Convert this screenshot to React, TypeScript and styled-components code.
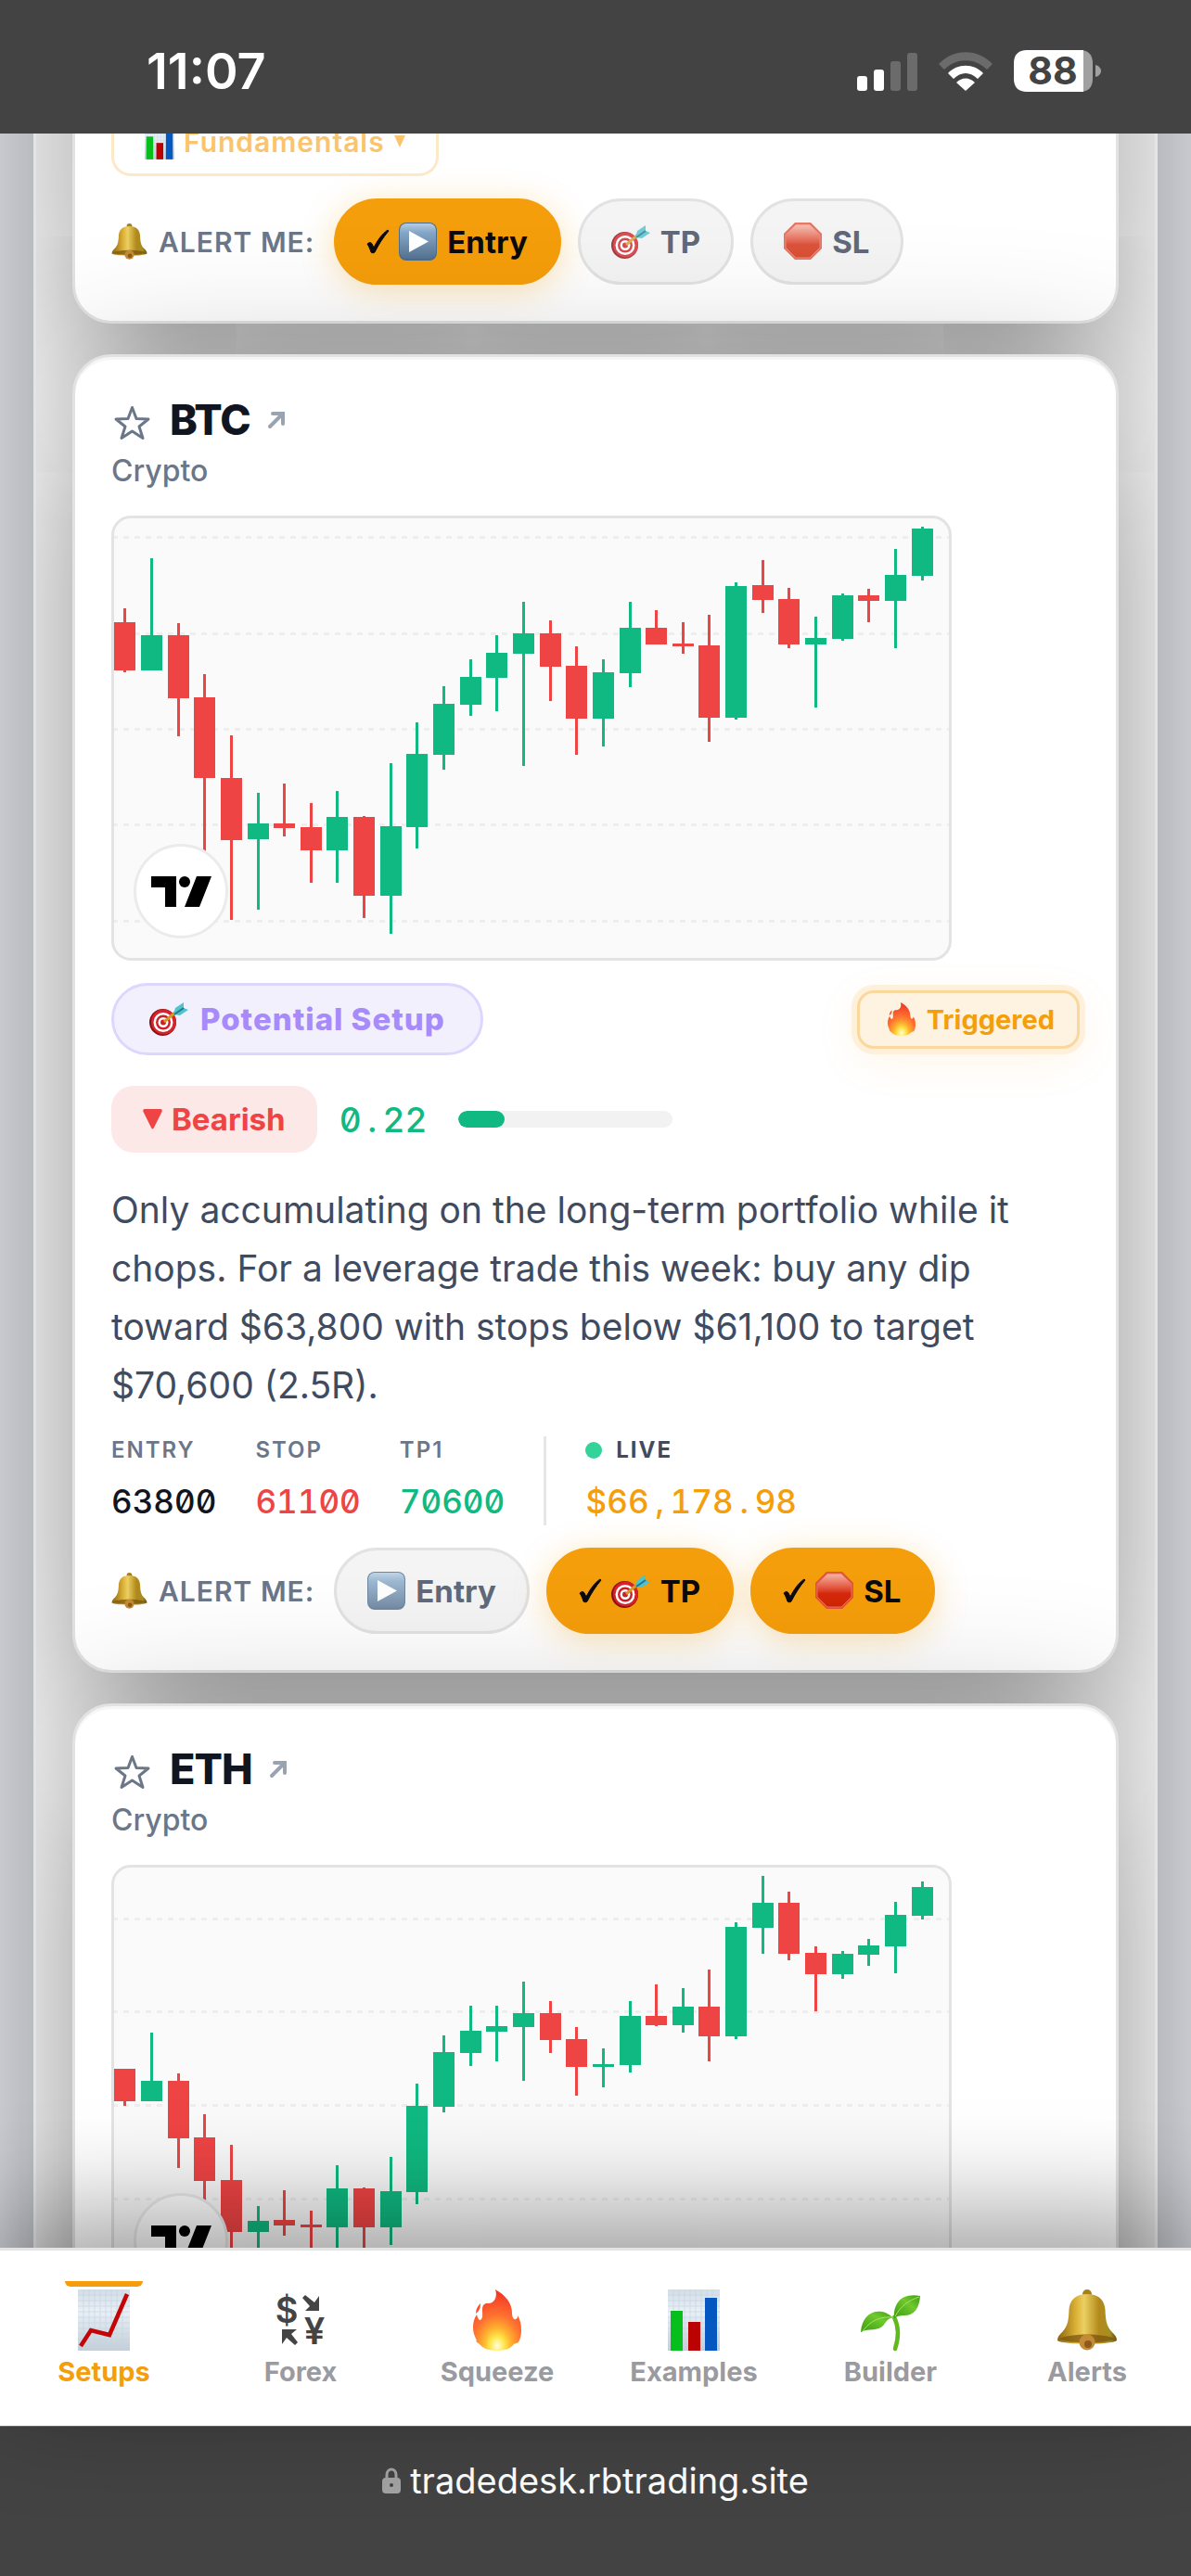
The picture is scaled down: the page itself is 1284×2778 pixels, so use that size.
import { Fragment, useState } from "react";
import styled, { createGlobalStyle, css } from "styled-components";

const GlobalStyle = createGlobalStyle`
  * {
    box-sizing: border-box;
  }
  body {
    margin: 0;
    background: #e8eaf1;
    color: #11151f;
    font-family: Inter, "Liberation Sans", sans-serif;
  }
  button {
    font-family: inherit;
  }
  svg {
    display: block;
    flex: none;
    overflow: visible;
  }
`;

const Screen = styled.div`
  display: flex;
  flex-direction: column;
  height: 100vh;
  overflow: hidden;
`;

const StatusBar = styled.header`
  display: flex;
  flex: none;
  align-items: center;
  justify-content: space-between;
  height: 144px;
  padding: 9px 96px 0 158px;
  background: #434343;
  color: #fff;
  z-index: 2;
`;

const Clock = styled.time`
  font-size: 54px;
  font-weight: 600;
  line-height: 60px;
`;

const StatusIcons = styled.div`
  display: flex;
  align-items: center;
  gap: 23px;
`;

const Feed = styled.main`
  flex: 1;
  min-height: 0;
  padding: 0 36px;
`;

/* the feed is scrolled, so the panel starts above the visible area */
const Panel = styled.div`
  display: flex;
  flex-direction: column;
  gap: 33px;
  margin-top: -400px;
  padding: 102px 39px 0;
  height: 3300px;
  overflow: hidden;
  border: 3px solid #e3e4e6;
  background: #fff;
  box-shadow: 0 60px 180px rgba(0, 0, 0, 0.4);
`;

const Card = styled.article`
  display: flex;
  flex: none;
  flex-direction: column;
  padding: 39px;
  border: 3px solid #e2e2e3;
  border-radius: 42px;
  background: #fff;
  box-shadow: 0 60px 180px rgba(0, 0, 0, 0.45), inset 0 3px 0 #f6f6f6;
`;

const ScrolledCard = styled(Card)`
  justify-content: flex-end;
  height: 500px;
`;

const FundamentalsButton = styled.button`
  display: flex;
  align-items: center;
  align-self: flex-start;
  gap: 10px;
  height: 75px;
  margin-bottom: 24px;
  padding: 0 33px;
  border: 3px solid #fde8c8;
  border-radius: 21px;
  background: #fff;
  color: #f9c46c;
  font-size: 30px;
  font-weight: 600;
  letter-spacing: 1px;
`;

const TitleRow = styled.div`
  display: flex;
  align-items: center;
  height: 57px;
`;

const StarButton = styled.button`
  margin: 6px 21px 0 3px;
  padding: 0;
  border: 0;
  background: none;
`;

const Symbol = styled.h2`
  margin: 0;
  font-size: 45px;
  font-weight: 800;
  letter-spacing: -1px;
  line-height: 57px;
`;

const OpenLink = styled.a`
  margin-left: 18px;
`;

const Market = styled.div`
  margin: 6px 0 27px;
  color: #6b7789;
  font-size: 32px;
  font-weight: 500;
  line-height: 42px;
`;

const ChartBox = styled.div`
  position: relative;
  width: 906px;
  max-width: 100%;
  height: 480px;
  overflow: hidden;
  border: 3px solid #e3e3e4;
  border-radius: 21px;
  background: #fafafa;
`;

const ChartLogo = styled.a`
  position: absolute;
  left: 21px;
  bottom: 21px;
  display: flex;
  align-items: center;
  justify-content: center;
  width: 102px;
  height: 102px;
  border: 3px solid #ebebeb;
  border-radius: 50%;
  background: #fff;
`;

const BadgeRow = styled.div`
  display: flex;
  align-items: center;
  justify-content: space-between;
  margin: 24px 0 33px;
`;

const SetupBadge = styled.span`
  display: flex;
  align-items: center;
  gap: 13px;
  height: 78px;
  padding: 0 38px;
  border: 3px solid #ddd6fe;
  border-radius: 39px;
  background: #f3f0fe;
  color: #a78bfa;
  font-size: 33px;
  font-weight: 800;
  letter-spacing: 1px;
`;

const TriggeredBadge = styled.span`
  display: flex;
  align-items: center;
  gap: 12px;
  height: 63px;
  padding: 0 24px 0 30px;
  border: 3px solid #fad89d;
  border-radius: 18px;
  background: #fef3e1;
  box-shadow: 0 0 0 6px #fef0da, 0 12px 48px rgba(245, 158, 11, 0.1);
  color: #f59e0b;
  font-size: 29px;
  font-weight: 700;
`;

const BiasRow = styled.div`
  display: flex;
  align-items: center;
  gap: 24px;
`;

const BiasBadge = styled.span`
  display: flex;
  align-items: center;
  gap: 10px;
  height: 72px;
  padding: 0 34px;
  border-radius: 24px;
  background: #fde8e8;
  color: #ef4444;
  font-size: 33px;
  font-weight: 700;
`;

const Track = styled.div`
  width: 231px;
  height: 18px;
  margin-left: 9px;
  overflow: hidden;
  border-radius: 9px;
  background: #f2f2f2;
`;

const TrackFill = styled.div`
  height: 100%;
  border-radius: 9px;
  background: #10b981;
`;

const Notes = styled.p`
  margin: 30px 0 24px;
  color: #404b5f;
  font-size: 39px;
  line-height: 63px;
`;

const Levels = styled.dl`
  display: flex;
  margin: 0 0 24px;
`;

const Level = styled.div<{ $divided?: boolean }>`
  display: flex;
  flex-direction: column;
  gap: 15px;
  padding-right: 42px;
  ${(p) =>
    p.$divided &&
    css`
      padding-left: 42px;
      border-left: 3px solid #e6e6e7;
    `}
`;

const LevelLabel = styled.dt<{ $live?: boolean }>`
  display: flex;
  align-items: center;
  gap: 15px;
  color: ${(p) => (p.$live ? "#404b5f" : "#6b7789")};
  font-size: 24px;
  font-weight: ${(p) => (p.$live ? 700 : 600)};
  letter-spacing: 2px;
  line-height: 30px;
`;

const LiveDot = styled.span`
  width: 18px;
  height: 18px;
  border-radius: 50%;
  background: #34d399;
`;

const LevelValue = styled.dd`
  margin: 0;
`;

const Digits = styled.span<{ $color: string; $large?: boolean }>`
  color: ${(p) => p.$color};
  font-size: ${(p) => (p.$large ? 37 : 35)}px;
  font-weight: 500;
  line-height: 51px;
  font-feature-settings: "tnum", "zero";
`;

const Mark = styled.span`
  display: inline-block;
  width: 23px;
  text-align: center;
`;

const AlertRow = styled.div`
  display: flex;
  align-items: center;
  gap: 18px;
`;

const AlertLabel = styled.span`
  display: flex;
  align-items: center;
  gap: 12px;
  margin-right: 3px;
  color: #6b7789;
  font-size: 30px;
  font-weight: 600;
  letter-spacing: 1px;
`;

const AlertToggle = styled.button<{ $on: boolean }>`
  display: flex;
  align-items: center;
  gap: 11px;
  height: 93px;
  padding: 0 33px;
  border: 3px solid ${(p) => (p.$on ? "#f59e0b" : "#e2e2e3")};
  border-radius: 47px;
  background: ${(p) => (p.$on ? "#f59e0b" : "#f4f4f5")};
  box-shadow: ${(p) => (p.$on ? "0 6px 36px rgba(245, 158, 11, 0.3)" : "none")};
  color: ${(p) => (p.$on ? "#0a0a0f" : "#5f6979")};
  font-size: 33px;
  font-weight: 700;

  svg {
    opacity: ${(p) => (p.$on ? 1 : 0.8)};
  }
`;

const TabBar = styled.nav`
  display: flex;
  flex: none;
  height: 192px;
  padding: 0 6px;
  border-top: 3px solid #e4e4e4;
  background: #fff;
  box-shadow: 0 -30px 120px rgba(0, 0, 0, 0.4);
  z-index: 1;
`;

const Tab = styled.a<{ $active?: boolean }>`
  position: relative;
  display: flex;
  flex: 1;
  flex-direction: column;
  align-items: center;
  gap: 5px;
  padding-top: 42px;
  color: ${(p) => (p.$active ? "#f59e0b" : "#9a9ba1")};
  font-size: 29px;
  font-weight: 700;
  line-height: 36px;
  text-decoration: none;

  &::before {
    content: "";
    position: absolute;
    top: 33px;
    width: 84px;
    height: 6px;
    border-radius: 0 0 6px 6px;
    background: ${(p) => (p.$active ? "#f59e0b" : "transparent")};
  }
`;

const TabIcon = styled.span`
  display: flex;
  align-items: center;
  justify-content: center;
  height: 66px;
`;

const AddressBar = styled.footer`
  display: flex;
  flex: none;
  justify-content: center;
  gap: 10px;
  height: 162px;
  padding-top: 33px;
  border-top: 1px solid #707070;
  background: #434343;
  color: #fff;
  font-size: 38px;
  line-height: 50px;
`;

const AddressLock = styled.span`
  display: flex;
  align-items: center;
  height: 50px;
`;

/* ---------- icons ---------- */

const HiddenDefs = styled.svg`
  position: absolute;
  width: 0;
  height: 0;
`;

function Gradients() {
  return (
    <HiddenDefs aria-hidden>
      <defs>
        <linearGradient id="gold" x1="0" x2="1" y1="0" y2="0">
          <stop offset="0" stopColor="#8a6410" />
          <stop offset="0.3" stopColor="#d9ae34" />
          <stop offset="0.45" stopColor="#ecd062" />
          <stop offset="0.7" stopColor="#b3891c" />
          <stop offset="0.88" stopColor="#a58f22" />
          <stop offset="1" stopColor="#6e4f0e" />
        </linearGradient>
        <radialGradient id="flame" cx="0.5" cy="0.92" r="0.85">
          <stop offset="0" stopColor="#fffde0" />
          <stop offset="0.18" stopColor="#ffe648" />
          <stop offset="0.36" stopColor="#ffac2e" />
          <stop offset="0.6" stopColor="#ff7030" />
          <stop offset="1" stopColor="#f53a24" />
        </radialGradient>
        <linearGradient id="steel" x1="0" x2="0" y1="0" y2="1">
          <stop offset="0" stopColor="#b5cde3" />
          <stop offset="0.25" stopColor="#86a8c8" />
          <stop offset="1" stopColor="#55738f" />
        </linearGradient>
        <linearGradient id="stopRed" x1="0" x2="0" y1="0" y2="1">
          <stop offset="0" stopColor="#f6b8a8" />
          <stop offset="0.5" stopColor="#e0442c" />
          <stop offset="0.6" stopColor="#d52a0c" />
          <stop offset="1" stopColor="#cf2503" />
        </linearGradient>
        <linearGradient id="paper" x1="0" x2="0" y1="0" y2="1">
          <stop offset="0" stopColor="#d3dde6" />
          <stop offset="0.35" stopColor="#e9f0f6" />
          <stop offset="1" stopColor="#c3ced8" />
        </linearGradient>
        <linearGradient id="leaf" x1="0" x2="1" y1="1" y2="0">
          <stop offset="0" stopColor="#3c9a10" />
          <stop offset="0.6" stopColor="#6fca2c" />
          <stop offset="1" stopColor="#3f9c14" />
        </linearGradient>
      </defs>
    </HiddenDefs>
  );
}

const BellIcon = ({ size }: { size: number }) => (
  <svg width={size} height={size} viewBox="0 0 66 66">
    <rect x="28" y="0" width="10" height="10" rx="5" fill="#a77f1c" />
    <path
      d="M33 5C20 5 14 12 13.500 22C13 34 12 39 7 45C3 49 1 51 1 55C8 60 58 60 65 55C65 51 63 49 59 45C54 39 53 34 52.500 22C52 12 46 5 33 5Z"
      fill="url(#gold)"
    />
    <path d="M3 53C16 47 50 47 63 53C54 59 12 59 3 53Z" fill="#7b5510" opacity="0.75" />
    <circle cx="33" cy="57" r="8.500" fill="#c58a35" />
    <circle cx="34" cy="59" r="4" fill="#8b5a1c" />
  </svg>
);

const FireIcon = ({ width, height }: { width: number; height: number }) => (
  <svg width={width} height={height} viewBox="0 0 52 66" preserveAspectRatio="none">
    <path
      d="M24 0C35 6 42 15 42 25C42 30 44 33 46 32C48 31 48 30 48 28C51 33 52 38 52 44C52 49 51 53 49 57L44 59C40 64 34 66 26 66C18 66 11 64 7 59L3 56C4 56 4 55 3 53C1 49 0 45 0 41C0 36 1 31 4 27C5 31 6 33 8 33C11 31 10 26 10 22C10 17 12 15 15 15C22 16 27 9 24 0Z"
      fill="url(#flame)"
    />
    <path d="M8 15C8 19 7 23 3 26C3 21 5 18 8 15Z" fill="#f8502c" />
  </svg>
);

const TargetIcon = () => (
  <svg width="42" height="36" viewBox="0 0 42 36">
    <circle cx="14.500" cy="21.500" r="14.500" fill="#8d1016" />
    <circle cx="15.500" cy="21" r="13.500" fill="#d5242b" />
    <circle cx="15" cy="21.500" r="10.500" fill="#fff" />
    <circle cx="15" cy="21.500" r="8" fill="#cf2028" />
    <circle cx="15" cy="21.500" r="5.500" fill="#fff" />
    <circle cx="15" cy="21.500" r="3" fill="#cf2028" />
    <path d="M16 21L30 9" stroke="#d39a2c" strokeWidth="3" />
    <path d="M26 13L28 6L37 0L37 6L42 8L33 14Z" fill="#4fc3cf" />
    <path d="M27 13L37 6" stroke="#23788a" strokeWidth="2" />
  </svg>
);

const PlayIcon = () => (
  <svg width="41" height="41" viewBox="0 0 41 41">
    <rect width="41" height="41" rx="8" fill="#4e6d8a" />
    <rect x="1" y="1" width="39" height="38" rx="7" fill="url(#steel)" />
    <path d="M11 9L32 20.500L11 32Z" fill="#fff" />
  </svg>
);

const StopIcon = () => (
  <svg width="41" height="41" viewBox="0 0 41 41">
    <path d="M12 0H29L41 12V28L29 40H12L0 28V12Z" fill="#e2523a" />
    <path
      d="M13 2H28L39 13V27L28 38H13L2 27V13Z"
      fill="url(#stopRed)"
      stroke="#e8705a"
      strokeWidth="1"
    />
  </svg>
);

const paperGrid =
  "M0 6H56M0 12H56M0 18H56M0 24H56M0 30H56M0 36H56M0 42H56M0 48H56M0 54H56M0 60H56M6 0V66M12 0V66M18 0V66M24 0V66M30 0V66M36 0V66M42 0V66M48 0V66";

const GrowthIcon = () => (
  <svg width="56" height="66" viewBox="0 0 56 66">
    <rect width="56" height="66" fill="url(#paper)" />
    <path d={paperGrid} stroke="#c4d5e3" strokeWidth="1" opacity="0.7" />
    <path d="M3 61L14 44L34 49L53 5" fill="none" stroke="#c50505" strokeWidth="4.500" />
  </svg>
);

const BarsIcon = ({ width, height }: { width: number; height: number }) => (
  <svg width={width} height={height} viewBox="0 0 56 66">
    <rect width="56" height="66" fill="url(#paper)" />
    <path d={paperGrid} stroke="#c4d5e3" strokeWidth="1" opacity="0.7" />
    <rect x="3" y="23" width="13" height="43" fill="#06be1c" />
    <rect x="22" y="35" width="13" height="31" fill="#bb0202" />
    <rect x="40" y="9" width="13" height="57" fill="#0458c0" />
  </svg>
);

const ForexIcon = () => (
  <svg width="54" height="54" viewBox="0 0 54 54" fill="#444">
    <text x="12" y="30" fontSize="38" fontWeight="600" textAnchor="middle">
      $
    </text>
    <text x="42" y="53" fontSize="40" fontWeight="600" textAnchor="middle">
      ¥
    </text>
    <path d="M47 1V17H32L37 12L29 3L32 0L42 8Z" />
    <path d="M7 37H23L17 42L24 51L21 54L12 46L7 53Z" />
  </svg>
);

const SeedlingIcon = () => (
  <svg width="66" height="66" viewBox="0 0 66 66">
    <path d="M37 30C42 40 42 52 38 64" fill="none" stroke="#62b81f" strokeWidth="4.500" strokeLinecap="round" />
    <path d="M1 46C2 30 12 22 24 24C30 25 34 29 37 31C32 30 30 32 26 38C19 46 10 41 1 46Z" fill="url(#leaf)" />
    <path d="M65 7C64 20 59 28 48 28C43 28 39 29 37 31C36 16 44 3 65 7Z" fill="url(#leaf)" />
    <path d="M3 45C12 33 22 29 36 30M38 29C44 18 52 12 64 8" fill="none" stroke="#a6e36a" strokeWidth="1" />
  </svg>
);

const StarIcon = () => (
  <svg width="39" height="38" viewBox="0 0 39 38" fill="none" stroke="#6b7789" strokeWidth="3" strokeLinejoin="round">
    <path d="M19.500 2.500L24 14.500L37 15L27 23L31 35.500L19.500 28L8 35.500L12 23L2 15L15 14.500Z" />
  </svg>
);

const ArrowIcon = () => (
  <svg width="20" height="20" viewBox="0 0 20 20" fill="none" stroke="#9aa3b0" strokeWidth="4" strokeLinecap="round">
    <path d="M3 17L16 4M6 3H17V14" />
  </svg>
);

const CheckIcon = () => (
  <svg width="23" height="25" viewBox="0 0 23 25" fill="#0a0a0f" stroke="#0a0a0f" strokeWidth="1">
    <path d="M0 15C2 13 4 13 5 15L7 19C11 11 16 4 22 0L23 1C17 8 12 16 8 24C7 25 5 25 4 24C3 21 2 18 0 15Z" />
  </svg>
);

const TradingViewMark = () => (
  <svg width="65" height="33" viewBox="0 0 65 33">
    <path d="M0 0H27V33H15V12H0ZM49 0H65L52 33H36Z" />
    <circle cx="36" cy="6" r="6" />
  </svg>
);

const SignalIcon = () => (
  <svg width="65" height="42" viewBox="0 0 65 42" fill="#fff">
    <rect x="0" y="26" width="11" height="16" rx="3" />
    <rect x="18" y="19" width="11" height="23" rx="3" />
    <rect x="36" y="10" width="11" height="32" rx="3" fill="#6b6b6b" />
    <rect x="54" y="1" width="11" height="41" rx="3" fill="#6b6b6b" />
  </svg>
);

const WifiIcon = () => (
  <svg width="58" height="42" viewBox="0 0 58 42">
    <path d="M0 13C16 -4 42 -4 58 13L52 19C39 6 19 6 6 19Z" fill="#6b6b6b" />
    <path d="M10 23C20 12 38 12 48 23L42 29C34 21 24 21 16 29Z" fill="#fff" />
    <path d="M19 33C25 27 33 27 39 33L29 42Z" fill="#fff" />
  </svg>
);

const BatteryIcon = () => (
  <svg width="95" height="45" viewBox="0 0 95 45">
    <path d="M70 0H72C80 0 85 5 85 14V31C85 40 80 45 72 45H70Z" fill="#a1a1a1" />
    <path d="M14 0H75V45H14C5 45 0 40 0 31V14C0 5 5 0 14 0Z" fill="#fff" />
    <path d="M88 16C92 17 94 20 94 22.500C94 25 92 28 88 29Z" fill="#a1a1a1" />
    <text x="42" y="37" fontSize="41" fontWeight="700" textAnchor="middle" fill="#434343">
      88
    </text>
  </svg>
);

const LockIcon = () => (
  <svg width="20" height="28" viewBox="0 0 20 28">
    <path d="M5 13V8C5 0 15 0 15 8V13" fill="none" stroke="#a3a3a3" strokeWidth="3" />
    <rect x="0" y="11" width="20" height="17" rx="4" fill="#a3a3a3" />
    <circle cx="10" cy="19" r="2" fill="#434343" />
  </svg>
);

/* ---------- charts ---------- */

// direction, high, body top, body bottom, low
type Candle = ["up" | "down", number, number, number, number];

const btcCandles: Candle[] = [
  ["down", 97, 112, 164, 166],
  ["up", 43, 126, 164, 164],
  ["down", 113, 126, 194, 235],
  ["down", 168, 193, 280, 374],
  ["down", 234, 280, 347, 433],
  ["up", 296, 329, 346, 422],
  ["down", 286, 329, 334, 343],
  ["down", 307, 333, 358, 393],
  ["up", 294, 322, 358, 393],
  ["down", 321, 322, 407, 431],
  ["up", 264, 332, 407, 448],
  ["up", 220, 254, 333, 356],
  ["up", 181, 200, 255, 271],
  ["up", 152, 171, 201, 213],
  ["up", 126, 145, 172, 208],
  ["up", 90, 124, 146, 267],
  ["down", 110, 124, 160, 197],
  ["down", 138, 159, 216, 255],
  ["up", 152, 166, 216, 246],
  ["up", 90, 118, 167, 182],
  ["down", 99, 118, 136, 136],
  ["down", 112, 135, 138, 146],
  ["down", 104, 137, 215, 241],
  ["up", 69, 73, 215, 217],
  ["down", 45, 72, 88, 102],
  ["down", 75, 87, 136, 140],
  ["up", 106, 129, 136, 204],
  ["up", 81, 83, 130, 132],
  ["down", 76, 83, 89, 112],
  ["up", 33, 61, 89, 140],
  ["up", 9, 11, 62, 67],
];

const ethCandles: Candle[] = [
  ["down", 217, 217, 252, 257],
  ["up", 178, 230, 252, 252],
  ["down", 222, 230, 292, 324],
  ["down", 266, 291, 338, 366],
  ["down", 299, 337, 393, 430],
  ["up", 365, 381, 393, 430],
  ["down", 348, 380, 386, 397],
  ["down", 370, 385, 388, 420],
  ["up", 321, 346, 388, 425],
  ["down", 345, 346, 388, 425],
  ["up", 312, 349, 388, 407],
  ["up", 233, 257, 350, 363],
  ["up", 181, 199, 258, 264],
  ["up", 149, 176, 200, 214],
  ["up", 149, 171, 177, 209],
  ["up", 123, 157, 172, 230],
  ["down", 144, 157, 186, 200],
  ["down", 172, 185, 215, 246],
  ["up", 195, 212, 215, 237],
  ["up", 144, 160, 213, 221],
  ["down", 126, 160, 170, 171],
  ["up", 130, 150, 170, 178],
  ["down", 110, 150, 182, 209],
  ["up", 59, 64, 182, 185],
  ["up", 9, 38, 65, 93],
  ["down", 26, 38, 93, 100],
  ["down", 85, 92, 115, 155],
  ["up", 90, 93, 115, 120],
  ["up", 77, 84, 94, 106],
  ["up", 37, 51, 85, 114],
  ["up", 15, 21, 52, 56],
];

type ChartProps = {
  candles: Candle[];
  gridLines: number[];
};

function Chart({ candles, gridLines }: ChartProps) {
  return (
    <ChartBox>
      <svg width="900" height="474" viewBox="0 0 900 474" shapeRendering="crispEdges">
        {gridLines.map((y) => (
          <line
            key={y}
            x1="0"
            x2="900"
            y1={y + 0.5}
            y2={y + 0.5}
            stroke="#eeeeee"
            strokeWidth="3"
            strokeDasharray="6 6"
            strokeDashoffset="2"
          />
        ))}
        {candles.map(([dir, high, top, bottom, low], i) => {
          const x = Math.round(i * 28.64 + 0.37);
          return (
            <g key={i} fill={dir === "up" ? "#10b981" : "#ef4444"}>
              <rect x={x + 10} y={high} width="3" height={low - high} />
              <rect x={x} y={top} width="23" height={bottom - top} />
            </g>
          );
        })}
      </svg>
      <ChartLogo href="#tradingview" aria-label="Charts by TradingView">
        <TradingViewMark />
      </ChartLogo>
    </ChartBox>
  );
}

/* ---------- card parts ---------- */

type PriceProps = {
  value: string;
  color: string;
  large?: boolean;
};

// punctuation gets the same cell as a digit
function Price({ value, color, large }: PriceProps) {
  return (
    <Digits $color={color} $large={large}>
      {value.split(/([$,.])/).map((part, i) =>
        /^[$,.]$/.test(part) ? <Mark key={i}>{part}</Mark> : <Fragment key={i}>{part}</Fragment>
      )}
    </Digits>
  );
}

type AlertName = "Entry" | "TP" | "SL";

const alertIcons = {
  Entry: <PlayIcon />,
  TP: <TargetIcon />,
  SL: <StopIcon />,
};

function Alerts({ initial }: { initial: AlertName[] }) {
  const [active, setActive] = useState<AlertName[]>(initial);

  const toggle = (name: AlertName) =>
    setActive((prev) => (prev.includes(name) ? prev.filter((n) => n !== name) : [...prev, name]));

  return (
    <AlertRow>
      <AlertLabel>
        <BellIcon size={39} />
        ALERT ME:
      </AlertLabel>
      {(["Entry", "TP", "SL"] as AlertName[]).map((name) => {
        const on = active.includes(name);
        return (
          <AlertToggle key={name} $on={on} aria-pressed={on} onClick={() => toggle(name)}>
            {on && <CheckIcon />}
            {alertIcons[name]}
            {name}
          </AlertToggle>
        );
      })}
    </AlertRow>
  );
}

function CardHeader({ symbol }: { symbol: string }) {
  return (
    <>
      <TitleRow>
        <StarButton aria-label={`Add ${symbol} to favourites`}>
          <StarIcon />
        </StarButton>
        <Symbol>{symbol}</Symbol>
        <OpenLink href={`#${symbol}`} aria-label={`Open ${symbol}`}>
          <ArrowIcon />
        </OpenLink>
      </TitleRow>
      <Market>Crypto</Market>
    </>
  );
}

const tabs = [
  { label: "Setups", icon: <GrowthIcon /> },
  { label: "Forex", icon: <ForexIcon /> },
  { label: "Squeeze", icon: <FireIcon width={52} height={66} /> },
  { label: "Examples", icon: <BarsIcon width={56} height={66} /> },
  { label: "Builder", icon: <SeedlingIcon /> },
  { label: "Alerts", icon: <BellIcon size={66} /> },
];

function App() {
  const score = 0.22;

  return (
    <Screen>
      <GlobalStyle />
      <Gradients />
      <StatusBar>
        <Clock>11:07</Clock>
        <StatusIcons>
          <SignalIcon />
          <WifiIcon />
          <BatteryIcon />
        </StatusIcons>
      </StatusBar>

      <Feed>
        <Panel>
          <ScrolledCard>
            <FundamentalsButton>
              <BarsIcon width={32} height={38} />
              Fundamentals
              <svg width="12" height="13" viewBox="0 0 11 12" fill="currentColor">
                <path d="M0 0H11L5.500 12Z" />
              </svg>
            </FundamentalsButton>
            <Alerts initial={["Entry"]} />
          </ScrolledCard>

          <Card>
            <CardHeader symbol="BTC" />
            <Chart candles={btcCandles} gridLines={[20, 124, 227, 330, 434]} />
            <BadgeRow>
              <SetupBadge>
                <TargetIcon />
                Potential Setup
              </SetupBadge>
              <TriggeredBadge>
                <FireIcon width={30} height={36} />
                Triggered
              </TriggeredBadge>
            </BadgeRow>
            <BiasRow>
              <BiasBadge>
                <svg width="21" height="22" viewBox="0 0 21 22" fill="currentColor">
                  <path d="M2 0H19C21 0 21 2 20.500 3L12 20C11 22 10 22 9 20L0.500 3C0 2 0 0 2 0Z" />
                </svg>
                Bearish
              </BiasBadge>
              <Price value="0.22" color="#10b981" large />
              <Track role="progressbar" aria-label="Score" aria-valuenow={score * 100}>
                <TrackFill style={{ width: `${score * 100}%` }} />
              </Track>
            </BiasRow>
            <Notes>
              Only accumulating on the long-term portfolio while it chops. For a leverage trade this
              week: buy any dip toward $63,800 with stops below $61,100 to target $70,600 (2.5R).
            </Notes>
            <Levels>
              <Level>
                <LevelLabel>ENTRY</LevelLabel>
                <LevelValue>
                  <Price value="63800" color="#11151f" />
                </LevelValue>
              </Level>
              <Level>
                <LevelLabel>STOP</LevelLabel>
                <LevelValue>
                  <Price value="61100" color="#ef4444" />
                </LevelValue>
              </Level>
              <Level>
                <LevelLabel>TP1</LevelLabel>
                <LevelValue>
                  <Price value="70600" color="#10b981" />
                </LevelValue>
              </Level>
              <Level $divided>
                <LevelLabel $live>
                  <LiveDot />
                  LIVE
                </LevelLabel>
                <LevelValue>
                  <Price value="$66,178.98" color="#f59e0b" />
                </LevelValue>
              </Level>
            </Levels>
            <Alerts initial={["TP", "SL"]} />
          </Card>

          <Card>
            <CardHeader symbol="ETH" />
            <Chart candles={ethCandles} gridLines={[55, 155, 256, 357, 458]} />
          </Card>
        </Panel>
      </Feed>

      <TabBar>
        {tabs.map(({ label, icon }, i) => (
          <Tab key={label} href={`#${label.toLowerCase()}`} $active={i === 0}>
            <TabIcon>{icon}</TabIcon>
            {label}
          </Tab>
        ))}
      </TabBar>
      <AddressBar>
        <AddressLock>
          <LockIcon />
        </AddressLock>
        tradedesk.rbtrading.site
      </AddressBar>
    </Screen>
  );
}

export default App;
